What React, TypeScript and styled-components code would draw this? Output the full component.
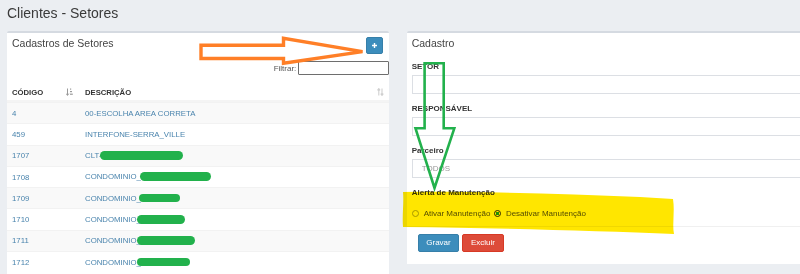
import React from "react";
import styled, { createGlobalStyle } from "styled-components";

const GlobalStyle = createGlobalStyle`
  html, body {
    margin: 0;
    height: 274px;
    overflow: hidden;
    background: #ebeef2;
    font-family: "Liberation Sans", Arial, sans-serif;
  }
  * { box-sizing: border-box; }
`;

const Page = styled.div`
  position: relative;
  padding: 5px 0 0 7px;
  width: 800px;
  height: 274px;
`;

const PageTitle = styled.h1`
  margin: 0 0 10px;
  font-size: 14px;
  line-height: 16px;
  font-weight: 400;
  color: #3a3a3a;
`;

const Columns = styled.div`
  display: grid;
  grid-template-columns: 382.3px 430px;
  column-gap: 17.4px;
  align-items: start;
`;

const Box = styled.section<{ $padBottom?: number }>`
  background: #fff;
  border-top: 2px solid #d5dae1;
  border-radius: 2px 2px 0 0;
  padding-bottom: ${(p) => p.$padBottom ?? 0}px;
`;

const BoxHeader = styled.div`
  display: flex;
  justify-content: space-between;
  align-items: flex-start;
  height: 20px;
  padding: 0 6px 0 5px;
`;

const BoxTitle = styled.h3`
  margin: 0;
  font-size: 10.5px;
  line-height: 20px;
  font-weight: 400;
  color: #444;
`;

const AddButton = styled.button`
  width: 17px;
  height: 17px;
  margin-top: 4px;
  padding: 0;
  display: flex;
  align-items: center;
  justify-content: center;
  background: #3c8dbc;
  border: 1px solid #367fa9;
  border-radius: 2px;
`;

const FilterRow = styled.div`
  display: flex;
  justify-content: flex-end;
  align-items: center;
  gap: 2px;
  padding-top: 8px;
`;

const FilterLabel = styled.label`
  font-size: 8px;
  color: #555;
`;

const FilterInput = styled.input`
  width: 91px;
  height: 14px;
  margin: 0;
  padding: 0 3px;
  border: 1.5px solid #6e6e6e;
  border-radius: 1px;
  background: #fff;
  outline: none;
`;

const Table = styled.div`
  margin-top: 9px;
`;

const HeadRow = styled.div`
  display: grid;
  grid-template-columns: 73px 1fr;
  height: 18px;
  border-bottom: 2px solid #f4f4f4;
`;

const HeadCell = styled.div<{ $padRight: number }>`
  display: flex;
  align-items: center;
  justify-content: space-between;
  padding: 0 ${(p) => p.$padRight}px 0 5px;
  font-size: 7.7px;
  font-weight: 700;
  color: #333;
`;

const Row = styled.div<{ $striped: boolean }>`
  display: grid;
  grid-template-columns: 73px 1fr;
  align-items: center;
  height: 21.3px;
  border-top: 1px solid #f2f2f2;
  background: ${(p) => (p.$striped ? "#f9f9f9" : "#fff")};
`;

const Cell = styled.div`
  padding-left: 5px;
  font-size: 7.8px;
  color: #4a84ad;
  white-space: nowrap;
`;

const Redact = styled.span<{ $w: number; $ml: number }>`
  display: inline-block;
  width: ${(p) => p.$w}px;
  height: 8.6px;
  margin-left: ${(p) => p.$ml}px;
  vertical-align: -1.5px;
  background: #22b14c;
  border-radius: 4.5px;
`;

const FormBody = styled.div`
  padding: 8px 0 7px 5px;
`;

const FormGroup = styled.div<{ $last?: boolean }>`
  margin-bottom: ${(p) => (p.$last ? 0 : 9.5)}px;
`;

const Label = styled.label`
  display: block;
  font-size: 8px;
  font-weight: 700;
  line-height: 11px;
  margin-bottom: 2.5px;
  color: #333;
`;

const TextInput = styled.input`
  display: block;
  width: 100%;
  height: 19px;
  margin: 0;
  border: 1px solid #dcdfe4;
  border-radius: 0;
  background: #fff;
  outline: none;
`;

const Select = styled.select`
  display: block;
  width: 100%;
  height: 19px;
  margin: 0;
  padding: 0 0 0 9px;
  appearance: none;
  border: 1px solid #dcdfe4;
  border-radius: 0;
  background: #fff;
  font-family: inherit;
  font-size: 8px;
  color: #999;
  outline: none;
`;

const RadioRow = styled.div`
  display: flex;
  align-items: center;
  gap: 4px;
  height: 11px;
  margin-top: 9.5px;
  padding-left: 0.5px;
`;

const RadioOption = styled.label`
  display: inline-flex;
  align-items: center;
  gap: 4.5px;
  font-size: 8px;
  color: #555;
`;

const RadioDot = styled.span<{ $checked: boolean }>`
  width: 7px;
  height: 7px;
  border-radius: 50%;
  border: 1px solid ${(p) => (p.$checked ? "#2b2b2b" : "#a8a8a8")};
  background: ${(p) =>
    p.$checked ? "radial-gradient(circle, #1fa340 0 1.6px, #fff 1.9px)" : "#fff"};
`;

const BoxFooter = styled.div`
  display: flex;
  gap: 3px;
  padding: 7px 11px 12.5px;
  border-top: 1px solid #f0f0f0;
`;

const ActionButton = styled.button<{ $variant: "primary" | "danger" }>`
  height: 18px;
  padding: 0 7.6px;
  border-radius: 2px;
  font-family: inherit;
  font-size: 8px;
  color: #fff;
  background: ${(p) => (p.$variant === "primary" ? "#3c8dbc" : "#dd4b39")};
  border: 1px solid ${(p) => (p.$variant === "primary" ? "#367fa9" : "#d73925")};
`;

const HighlightLayer = styled.svg`
  position: absolute;
  left: 0;
  top: 0;
  pointer-events: none;
  mix-blend-mode: multiply;
`;

const AnnotationLayer = styled.svg`
  position: absolute;
  left: 0;
  top: 0;
  pointer-events: none;
`;

const SortAsc = () => (
  <svg width="7" height="8" viewBox="0 0 7 8">
    <path d="M1.5 0.5V7.2M0.2 5.6L1.5 7.4L2.8 5.6" stroke="#9a9a9a" strokeWidth="1" fill="none" />
    <rect x="4" y="0.5" width="1.2" height="1.2" fill="#9a9a9a" />
    <rect x="4" y="3" width="2" height="1.2" fill="#9a9a9a" />
    <rect x="4" y="5.6" width="2.8" height="1.2" fill="#9a9a9a" />
  </svg>
);

const SortBoth = () => (
  <svg width="7" height="8" viewBox="0 0 7 8">
    <path
      d="M1.8 7.5V0.8M0.5 2.4L1.8 0.6L3.1 2.4M5 0.5V7.2M3.7 5.6L5 7.4L6.3 5.6"
      stroke="#cfcfcf"
      strokeWidth="1.1"
      fill="none"
    />
  </svg>
);

type Item = { code: string; desc: string; redact?: { w: number; ml: number } };

const items: Item[] = [
  { code: "4", desc: "00-ESCOLHA AREA CORRETA" },
  { code: "459", desc: "INTERFONE-SERRA_VILLE" },
  { code: "1707", desc: "CLT-", redact: { w: 83, ml: -1 } },
  { code: "1708", desc: "CONDOMINIO_", redact: { w: 71, ml: -1 } },
  { code: "1709", desc: "CONDOMINIO_", redact: { w: 41, ml: -2 } },
  { code: "1710", desc: "CONDOMINIO_", redact: { w: 48, ml: -4 } },
  { code: "1711", desc: "CONDOMINIO_", redact: { w: 58, ml: -4 } },
  { code: "1712", desc: "CONDOMINIO_", redact: { w: 53, ml: -4 } },
];

export default function App() {
  return (
    <>
      <GlobalStyle />
      <Page>
        <PageTitle>Clientes - Setores</PageTitle>
        <Columns>
          <Box $padBottom={10}>
            <BoxHeader>
              <BoxTitle>Cadastros de Setores</BoxTitle>
              <AddButton aria-label="Adicionar">
                <svg width="5" height="5" viewBox="0 0 5 5">
                  <path d="M2.5 0V5M0 2.5H5" stroke="#fff" strokeWidth="1.4" />
                </svg>
              </AddButton>
            </BoxHeader>
            <FilterRow>
              <FilterLabel>Filtrar:</FilterLabel>
              <FilterInput type="search" />
            </FilterRow>
            <Table>
              <HeadRow>
                <HeadCell $padRight={7}>
                  CÓDIGO
                  <SortAsc />
                </HeadCell>
                <HeadCell $padRight={5}>
                  DESCRIÇÃO
                  <SortBoth />
                </HeadCell>
              </HeadRow>
              {items.map((it, i) => (
                <Row key={it.code} $striped={i % 2 === 0}>
                  <Cell>{it.code}</Cell>
                  <Cell>
                    {it.desc}
                    {it.redact && <Redact $w={it.redact.w} $ml={it.redact.ml} />}
                  </Cell>
                </Row>
              ))}
            </Table>
          </Box>

          <Box>
            <BoxHeader>
              <BoxTitle>Cadastro</BoxTitle>
            </BoxHeader>
            <FormBody>
              <FormGroup>
                <Label>SETOR</Label>
                <TextInput />
              </FormGroup>
              <FormGroup>
                <Label>RESPONSÁVEL</Label>
                <TextInput />
              </FormGroup>
              <FormGroup>
                <Label>Parceiro</Label>
                <Select defaultValue="todos">
                  <option value="todos">TODOS</option>
                </Select>
              </FormGroup>
              <FormGroup $last>
                <Label>Alerta de Manutenção</Label>
                <RadioRow>
                  <RadioOption>
                    <RadioDot $checked={false} />
                    Ativar Manutenção
                  </RadioOption>
                  <RadioOption>
                    <RadioDot $checked />
                    Desativar Manutenção
                  </RadioOption>
                </RadioRow>
              </FormGroup>
            </FormBody>
            <BoxFooter>
              <ActionButton $variant="primary">Gravar</ActionButton>
              <ActionButton $variant="danger">Excluir</ActionButton>
            </BoxFooter>
          </Box>
        </Columns>

        <HighlightLayer width="800" height="274" viewBox="0 0 800 274">
          <path
            d="M403 192 C 470 191 560 194 640 197 L 673 199 C 675 212 672 224 674 234 C 600 231 500 228 403 227 C 402 215 404 203 403 192 Z"
            fill="#ffe600"
          />
        </HighlightLayer>

        <AnnotationLayer width="800" height="274" viewBox="0 0 800 274">
          <path
            d="M201 45.2 L283.5 45.2 L283.5 38.3 L362.5 51.6 L283.5 63.2 L283.5 58.5 L201 58.5 Z"
            fill="none"
            stroke="#ff7f27"
            strokeWidth="3.4"
          />
          <path
            d="M424.6 63.3 L443.7 63.3 L443.7 128.3 L454.3 128.3 L434.5 188 L415.5 128.3 L424.6 128.3 Z"
            fill="none"
            stroke="#22b14c"
            strokeWidth="2.6"
          />
        </AnnotationLayer>
      </Page>
    </>
  );
}
